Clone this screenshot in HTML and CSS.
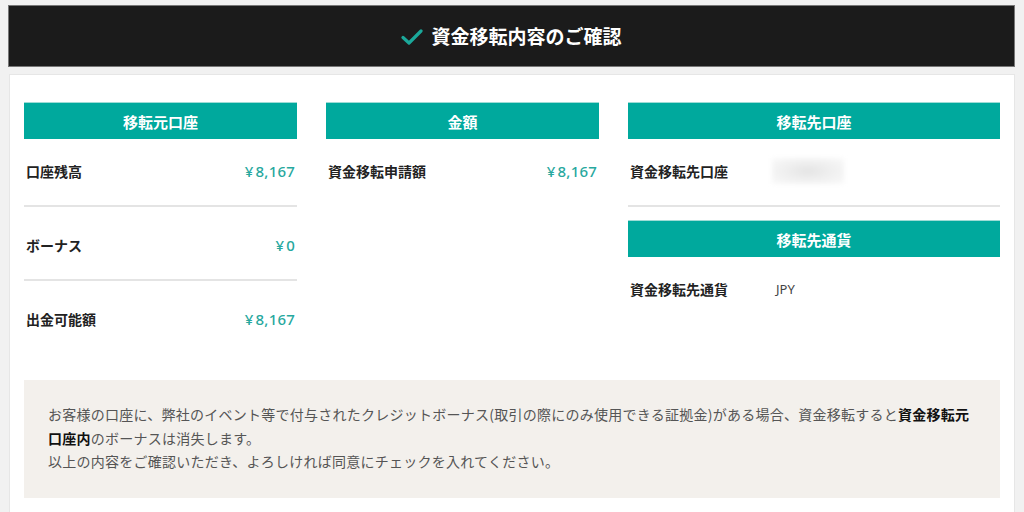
FILE: index.html
```html
<!DOCTYPE html>
<html lang="ja">
<head>
    <meta charset="UTF-8">
    <meta name="viewport" content="width=device-width, initial-scale=1.0">
    <title>資金移転内容のご確認</title>
    <link rel="stylesheet" href="styles.css">
</head>
<body>
    <div class="page-head">
        <svg class="check" width="22" height="16" viewBox="0 0 22 16">
            <path d="M2 8.5 L8 14 L20 2" fill="none" stroke="#1ba89a" stroke-width="3.2" stroke-linecap="round" stroke-linejoin="round"/>
        </svg>
        <h1>資金移転内容のご確認</h1>
    </div>

    <div class="card">
        <div class="columns">
            <div class="col">
                <div class="col-title">移転元口座</div>
                <div class="row">
                    <span class="label">口座残高</span>
                    <span class="amount"><span class="yen">¥</span>8,167</span>
                </div>
                <div class="row">
                    <span class="label">ボーナス</span>
                    <span class="amount"><span class="yen">¥</span>0</span>
                </div>
                <div class="row">
                    <span class="label">出金可能額</span>
                    <span class="amount"><span class="yen">¥</span>8,167</span>
                </div>
            </div>

            <div class="col">
                <div class="col-title">金額</div>
                <div class="row no-line">
                    <span class="label">資金移転申請額</span>
                    <span class="amount"><span class="yen">¥</span>8,167</span>
                </div>
            </div>

            <div class="col">
                <div class="col-title">移転先口座</div>
                <div class="row fixed">
                    <span class="label">資金移転先口座</span>
                    <span class="masked"></span>
                </div>
                <div class="col-title sub">移転先通貨</div>
                <div class="row fixed no-line">
                    <span class="label">資金移転先通貨</span>
                    <span class="plain">JPY</span>
                </div>
            </div>
        </div>

        <div class="notice">
            <p>お客様の口座に、弊社のイベント等で付与されたクレジットボーナス(取引の際にのみ使用できる証拠金)がある場合、資金移転すると<strong>資金移転元口座内</strong>のボーナスは消失します。<br>以上の内容をご確認いただき、よろしければ同意にチェックを入れてください。</p>
        </div>
    </div>
</body>
</html>
```

FILE: styles.css
```css
body {
    margin: 0;
    padding: 5px 9px 0 8px;
    background-color: #f1f1f1;
    font-family: "Noto Sans CJK JP", "Noto Sans", sans-serif;
    color: #222;
}
.page-head {
    display: flex;
    align-items: center;
    justify-content: center;
    gap: 8px;
    height: 60px;
    background: #1b1b1b;
    border: 1px solid #777;
}
.page-head h1 {
    margin: 0;
    color: #fff;
    font-size: 19px;
    font-weight: bold;
    line-height: 24px;
}
.check {
    margin-top: 2px;
}
.card {
    margin-top: 7px;
    margin-left: 1px;
    background: #fff;
    border: 1px solid #e6e6e6;
    border-bottom: none;
    padding: 27px 14px 15px 14px;
}
.columns {
    display: grid;
    grid-template-columns: 273px 273px 1fr;
    column-gap: 29px;
    align-items: start;
}
.col-title {
    height: 37px;
    line-height: 37px;
    background: #00a99d;
    border-top: 1px solid #9edcd6;
    box-sizing: border-box;
    text-align: center;
    color: #fff;
    font-size: 15px;
    font-weight: bold;
}
.col-title.sub {
    margin-top: 13px;
}
.row {
    display: flex;
    justify-content: space-between;
    align-items: center;
    padding: 28px 2px 24px 2px;
    height: 20px;
    line-height: 20px;
    border-bottom: 2px solid #e4e4e4;
}
.col-title + .row {
    padding-top: 22px;
}
.row:last-child {
    border-bottom: none;
}
.row.no-line {
    border-bottom: none;
}
.row.fixed {
    justify-content: flex-start;
}
.label {
    font-size: 14px;
    font-weight: bold;
    color: #222;
}
.row.fixed .label {
    width: 146px;
}
.amount {
    font-family: "Noto Sans", sans-serif;
    font-size: 15px;
    font-weight: 500;
    color: #27a89e;
    letter-spacing: 0.2px;
}
.yen {
    margin-right: 2px;
}
.plain {
    font-family: "Noto Sans", sans-serif;
    font-size: 13px;
    color: #444;
}
.masked {
    display: block;
    width: 72px;
    height: 26px;
    margin-left: -4px;
    background: radial-gradient(ellipse at center, #e4e4e4 0%, #efefef 45%, #fafafa 100%);
    filter: blur(2px);
}
.notice {
    margin-top: 27px;
    background: #f3f0ec;
    padding: 23px 24px 24px 24px;
}
.notice p {
    margin: 0;
    font-size: 14px;
    line-height: 23.5px;
    letter-spacing: 0.25px;
    color: #555;
}
.notice strong {
    color: #111;
}
```
